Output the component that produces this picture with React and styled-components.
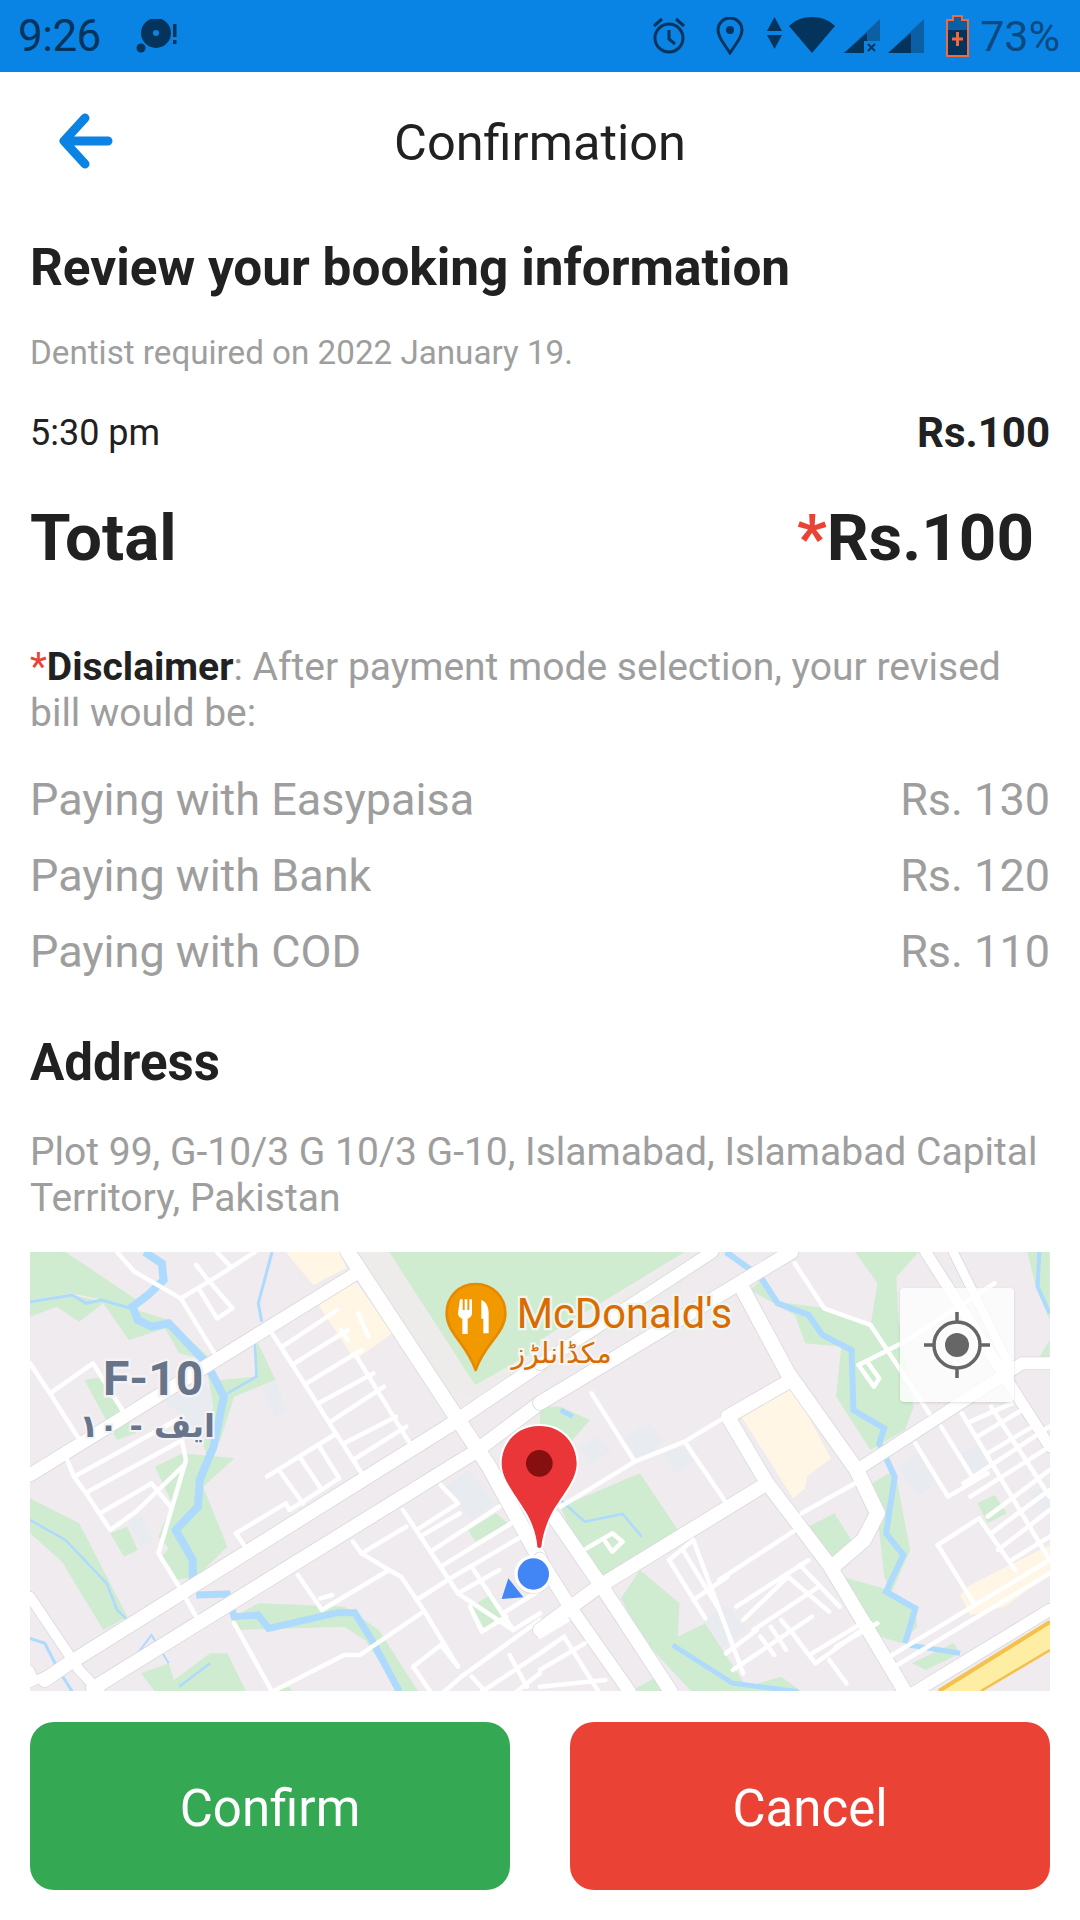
import React from "react";
import styled, { createGlobalStyle } from "styled-components";

const Global = createGlobalStyle`
  html, body { margin: 0; padding: 0; background: #fff; }
  body { font-family: Roboto, "Liberation Sans", sans-serif; color: #212121; }
`;

const Page = styled.div`
  width: 1080px;
  height: 1920px;
  display: flex;
  flex-direction: column;
  overflow: hidden;
  background: #fff;
`;

const StatusBar = styled.div`
  height: 72px;
  flex: none;
  background: #0a84e4;
  display: flex;
  align-items: center;
  padding: 0 20px 0 18px;
  color: #04345c;
`;
const Clock = styled.span`
  font-size: 44px;
  letter-spacing: -0.5px;
  margin-right: 35px;
  line-height: 72px;
`;
const StatusIcons = styled.div`
  margin-left: auto;
  display: flex;
  align-items: center;
`;
const StatusSvg = styled.svg`
  display: block;
  flex: none;
  margin-left: ${(p) => p.$gap || 0}px;
  margin-top: ${(p) => p.$up || 0}px;
`;
const Percent = styled.span`
  font-size: 43px;
  color: #0b4a80;
  margin-left: 10px;
  line-height: 72px;
`;

const Header = styled.header`
  height: 140px;
  flex: none;
  position: relative;
  display: flex;
  align-items: center;
  justify-content: center;
`;
const BackIcon = styled.svg`
  position: absolute;
  left: 56px;
  top: 39px;
`;
const Title = styled.h1`
  margin: 0;
  font-size: 50.5px;
  font-weight: 400;
  color: #212121;
`;

const Content = styled.main`
  flex: 1;
  padding: 0 30px;
  display: flex;
  flex-direction: column;
`;
const Heading = styled.h2`
  margin: 28px 0 0;
  font-size: 51.3px;
  line-height: 56px;
  font-weight: 700;
`;
const Sub = styled.p`
  margin: 37px 0 0;
  font-size: 33.2px;
  line-height: 40px;
  color: #9e9e9e;
`;
const Row = styled.div`
  display: flex;
  justify-content: space-between;
  align-items: baseline;
`;
const SlotRow = styled(Row)`
  margin-top: 35px;
  font-size: 36px;
  line-height: 50px;
  align-items: flex-end;
`;
const Price = styled.span`
  font-size: 42px;
  font-weight: 700;
`;
const TotalRow = styled(Row)`
  margin-top: 42px;
  font-size: 65.5px;
  line-height: 76px;
  font-weight: 700;
  padding-right: 16px;
`;
const Star = styled.span`
  color: #ea4335;
`;
const Disclaimer = styled.p`
  margin: 68px 0 0;
  font-size: 39px;
  line-height: 46px;
  color: #9e9e9e;
  b {
    color: #212121;
    font-weight: 700;
  }
`;
const Fees = styled.div`
  margin-top: 26px;
`;
const FeeRow = styled(Row)`
  font-size: 45px;
  height: 76px;
  line-height: 76px;
  color: #9e9e9e;
`;
const SubHeading = styled.h3`
  margin: 37px 0 0;
  font-size: 51px;
  line-height: 72px;
  font-weight: 700;
`;
const AddressText = styled.p`
  margin: 30px 0 0;
  font-size: 39px;
  line-height: 46px;
  color: #9e9e9e;
`;
const MapBox = styled.div`
  position: relative;
  margin-top: 31px;
  height: 439px;
  overflow: hidden;
  background: #efebef;
  flex: none;
`;
const MapSvg = styled.svg`
  display: block;
  width: 1020px;
  height: 439px;
`;
const LocateButton = styled.div`
  position: absolute;
  left: 870px;
  top: 36px;
  width: 114px;
  height: 114px;
  border-radius: 4px;
  background: rgba(255, 255, 255, 0.78);
  box-shadow: 0 1px 3px rgba(0, 0, 0, 0.12);
  display: flex;
  align-items: center;
  justify-content: center;
`;
const Footer = styled.footer`
  flex: none;
  display: flex;
  justify-content: space-between;
  padding: 0 30px 30px;
`;
const ActionButton = styled.button`
  width: 480px;
  height: 168px;
  border: 0;
  border-radius: 24px;
  background: ${(p) => p.$bg};
  color: #fff;
  font-family: inherit;
  font-size: 51px;
  font-weight: 400;
  padding: 4px 0 0;
`;

const GREEN = [
  "87,36 190,36 405,185 380,205 290,178 210,160 87,180",
  "87,185 210,165 380,205 375,300 300,190 230,245 165,200 87,230",
  "300,190 380,205 490,240 610,355 600,360 520,340 480,265 375,300",
  "600,385 640,420 740,410 745,300 800,420 680,470 640,600 600,650 590,610 620,500",
  "450,680 530,640 680,655 590,740 660,920 570,1010 510,1020 470,950 490,925 460,890 500,790",
  "87,775 230,850 370,1130 300,1170 180,965 87,880",
  "245,420 300,410 395,580 340,600",
  "320,880 370,860 400,930 360,950",
  "680,1130 750,1090 1000,1100 1100,1170 1215,1355 1160,1355 1060,1200 1000,1160 680,1170",
  "410,1300 490,1270 505,1320 610,1240 660,1240 715,1355 450,1355",
  "790,1355 840,1340 850,1355",
  "1370,1100 1430,1060 1470,1130 1410,1170",
  "1360,870 1440,820 1475,850 1380,905",
  "1130,36 1568,36 1568,325 1380,435",
];
const GREEN_R = [
  "0,36 420,36 0,300",
  "0,500 60,500 145,540 60,640 0,560",
  "60,800 290,700 400,870 180,1010 80,850",
  "610,150 650,110 690,185 830,205 960,255 980,130 915,36 1100,36 1035,110 1040,230 1085,500 1060,570 960,630 860,470 875,320 770,310 740,225",
  "780,860 855,820 910,910 840,970",
  "965,730 1030,690 1075,930 1020,1060 1000,1010 980,830",
  "860,1005 980,1040 1010,1050 1090,1100 1095,1160 1050,1210 990,1190",
  "1080,1270 1200,1210 1220,1240 1120,1290",
  "235,1075 290,990 405,1090 400,1190 480,1150 600,1340 700,1310 760,1355 440,1355 300,1200",
  "260,1355 340,1310 380,1355",
  "1270,790 1320,765 1355,820 1300,850",
  "1415,36 1480,36 1480,240 1440,140",
  "1440,370 1480,300 1480,370",
];
const YELLOW = [
  "830,36 990,36 1005,85 910,135",
  "1030,120 1140,280 1030,360 925,195",
];
const YELLOW_R = [
  "585,530 730,435 845,655 775,710 770,745 735,775",
  "1220,1065 1250,1035 1480,915 1480,1000 1350,1100 1250,1125",
];
const BLOCK = [
  "760,445 800,425 835,510 800,530",
  "370,840 410,825 445,900 410,925",
  "1290,745 1360,690 1440,790 1370,840",
  "470,480 590,430 630,470 610,610 520,520",
];
const BLOCK_R = [
  "115,620 170,590 205,630 145,675",
  "245,590 320,550 360,610 285,660",
  "360,640 425,620 445,665 395,705",
  "1040,680 1100,640 1150,730 1095,770",
  "1225,640 1280,615 1310,670 1260,710",
  "1415,760 1480,735 1480,830",
  "480,1140 540,1095 600,1170 530,1220",
];
const WATER = [
  [8, "420,36 470,70 475,120 430,165 385,200 400,240 440,260 490,250 600,370 650,470 620,620 580,720 575,800 510,870 560,960 560,1030"],
  [3, "87,185 210,165 250,190 295,180 380,205"],
  [2.5, "87,840 190,900 310,1030 340,1110 380,1150"],
  [3, "790,36 750,190 760,245"],
  [2.5, "740,310 745,410 660,460"],
  [7, "570,1065 660,1062 680,1130 750,1125 780,1165 980,1118 1030,1118 1080,1200 1160,1355"],
  [3, "87,1195 130,1210 170,1290 210,1355"],
  [2, "385,1260 440,1185 490,1270"],
  [2.5, "610,1270 520,1340"],
];
const WATER_R = [
  [6, "540,36 640,110 690,190 780,225 820,285 905,330 910,510 1000,565 985,610 1030,710 1005,880 1055,945 1005,1055 1090,1105 1060,1210"],
  [2.5, "60,780 130,845 240,822 295,890"],
  [5, "60,510 95,530"],
  [5, "1070,1215 1130,1225 1220,1240"],
  [5, "385,1215 560,1330 750,1355"],
  [4, "1450,36 1445,140 1480,220"],
];
const MAJOR = [
  [13, "87,705 1035,100"],
  [15, "1010,36 1280,460 1420,680 1568,957"],
  [14, "130,1320 200,1270 1300,560 1568,373"],
  [14, "270,1345 1373,640 1568,489"],
  [10, "87,1070 230,1290 290,1355"],
  [8, "87,1330 200,1270"],
  [8, "87,1290 100,1320"],
];
const MAJOR_R = [
  [12, "0,373 500,36"],
  [14, "0,489 730,36"],
  [15, "590,150 720,400 920,690 980,820 940,900 850,980"],
  [14, "0,1170 170,1040 660,730"],
  [14, "730,420 545,530 660,730 840,975 1060,1355"],
  [12, "920,690 1130,550 1400,370 1480,370"],
  [14, "40,830 180,1040 380,1355"],
  [12, "1090,1355 1480,1110"],
  [11, "1120,36 1480,620"],
  [9, "1200,36 1360,370"],
  [13, "0,957 87,1101 260,1355"],
];
const MINOR = [
  "340,36 390,95 525,175 620,335",
  "525,175 630,110 740,36",
  "630,36 670,80",
  "570,75 600,115 675,205 630,235 580,150",
  "145,460 270,370 355,510",
  "87,370 145,460 225,590",
  "195,660 215,710 250,760 320,870 395,815 530,680",
  "215,710 530,530",
  "255,755 530,600",
  "290,820 440,730",
  "440,730 495,800",
  "530,610 540,660 460,940 520,1040 575,1140",
  "790,280 890,440 960,555 1050,700",
  "820,320 980,210",
  "855,370 1010,270",
  "890,430 1050,330",
  "925,490 1085,400",
  "960,545 1115,440",
  "1000,610 1150,530",
  "1025,660 1180,560",
  "1030,340 1190,610",
  "990,270 1010,300",
  "1040,220 1070,290",
  "775,710 970,585",
  "810,690 880,790",
  "870,650 935,750",
  "925,615 985,715",
  "880,785 985,715",
  "830,790 840,810 880,785",
  "685,880 830,790",
  "685,880 715,925",
  "865,1005 935,1110 1130,990 1165,1010 1230,1110 1330,1280",
  "930,1075 965,1065",
  "1025,905 1050,940 1130,990",
  "1050,940 1180,860",
  "1170,810 1330,1060 1490,1170",
  "1210,870 1330,790 1280,735",
  "1220,890 1335,820",
  "1250,935 1450,800",
  "1280,980 1500,840",
  "1300,1020 1530,880",
  "1210,1080 1300,1020",
  "1330,1060 1450,990",
  "1370,980 1490,1170",
  "1365,1100 1400,1175 1470,1130",
  "680,1150 790,1355",
  "790,1355 1000,1245 1045,1245 1230,1115",
  "1200,1280 1280,1215 1330,1280",
  "1200,1280 1250,1355",
  "1290,1355 1340,1310 1568,1140",
  "1370,1310 1410,1355",
  "1480,1245 1530,1340",
  "1400,1355 1568,1240",
  "1500,1355 1568,1300",
  "1460,1120 1568,1050",
  "1490,1170 1568,1120",
];
const MINOR_R = [
  "740,70 825,205 960,255 1130,520",
  "925,375 1050,310 1320,130",
  "925,375 970,440 985,415 950,365",
  "150,460 275,665",
  "60,800 275,665 420,605 540,530",
  "420,605 535,780",
  "760,820 915,730",
  "520,1020 735,875",
  "375,960 445,900 590,1300",
  "375,960 480,1135",
  "415,930 515,1100",
  "445,1080 545,1010",
  "570,1100 780,960",
  "590,1140 720,1010",
  "620,1170 810,1040",
  "720,1010 840,1115",
  "755,975 870,1100",
  "640,1190 680,1245",
  "670,1160 715,1230",
  "700,1140 750,1200",
  "540,1240 630,1170",
  "560,1290 790,1130",
  "740,1190 800,1270 960,1150",
  "840,1260 890,1330",
  "790,1240 950,1140",
  "860,1220 980,1150",
  "135,925 210,880 240,905 210,935 190,905",
  "0,1190 80,1140",
  "0,1240 70,1190",
  "0,1290 130,1210",
  "0,1340 190,1320",
  "70,1190 170,1355",
  "1090,610 1185,770 1300,700",
  "1165,560 1255,710",
  "1225,520 1480,960",
  "1310,500 1480,770",
  "1250,545 1370,490",
  "1270,590 1400,510",
  "1300,640 1430,560",
  "1230,730 1480,560",
  "1250,770 1480,620",
  "1300,830 1480,690",
  "1310,880 1480,750",
  "1330,930 1480,810",
  "1370,960 1480,890",
  "1155,915 1275,835 1380,990",
  "1155,915 1260,1090",
  "1015,1250 1480,960",
  "1030,1280 1480,1000",
];

const Layer = ({ green, yellow, block, water, transform }) => (
  <g transform={transform}>
    {yellow.map((p) => <polygon key={p} points={p} fill="#fff6e6" />)}
    {block.map((p) => <polygon key={p} points={p} fill="#e8ebef" />)}
    {green.map((p) => <polygon key={p} points={p} fill="#cfecd0" />)}
    {water.map(([w, p]) => (
      <polyline key={p} points={p} fill="none" stroke="#aedafe" strokeWidth={w} vectorEffect="non-scaling-stroke" />
    ))}
  </g>
);
const Roads = ({ major, minor, transform }) => (
  <g transform={transform} fill="none" strokeLinejoin="round" strokeLinecap="round">
    {major.map(([w, p]) => (
      <polyline key={p} points={p} stroke="#d9d7db" strokeWidth={w + 1.5} vectorEffect="non-scaling-stroke" />
    ))}
    {minor.map((p) => (
      <polyline key={p} points={p} stroke="#fff" strokeWidth="4.5" vectorEffect="non-scaling-stroke" />
    ))}
    {major.map(([w, p]) => (
      <polyline key={p} points={p} stroke="#fff" strokeWidth={w} vectorEffect="non-scaling-stroke" />
    ))}
  </g>
);

const LEFT = "translate(-30 -12) scale(0.34435 0.33333)";
const RIGHT = "translate(510 -12) scale(0.34435 0.33333)";

const MapArt = () => (
  <MapSvg viewBox="0 0 1020 439">
    <polygon points="328,0 360,0 445,133 510,96 510,104 447,143 411,141" fill="#eeecea" />
    <polygon points="478,168 510,150 510,176 500,190 482,190" fill="#eeecea" />
    <polygon points="510,96 660,0 700,0 510,130" fill="#eeecea" />
    <Layer transform={LEFT} green={GREEN} yellow={YELLOW} block={BLOCK} water={WATER} />
    <Layer transform={RIGHT} green={GREEN_R} yellow={YELLOW_R} block={BLOCK_R} water={WATER_R} />
    <Roads transform={LEFT} major={MAJOR} minor={MINOR} />
    <Roads transform={RIGHT} major={MAJOR_R} minor={MINOR_R} />
    <polygon points="909,439 1020,370 1020,398 951,439" fill="#fdeea4" />
    <polyline points="909,439 1020,370" fill="none" stroke="#f5c04b" strokeWidth="4" />
    <polyline points="951,439 1020,398" fill="none" stroke="#f5c04b" strokeWidth="2.5" />
    <text x="73" y="143" fontFamily="Roboto" fontWeight="700" fontSize="48" fill="#677489" stroke="#f3f3f5" strokeWidth="5" paintOrder="stroke">F-10</text>
    <text x="185" y="185" direction="rtl" fontFamily="'DejaVu Sans', sans-serif" fontWeight="700" fontSize="32" fill="#677489" stroke="#f3f3f5" strokeWidth="4" paintOrder="stroke">ایف - ١٠</text>
    <g transform="translate(400 8) scale(0.33333)">
      <path d="M137,72 C85,72 50,112 50,160 C50,220 110,250 137,330 C164,250 226,220 226,160 C226,112 189,72 137,72 Z" fill="#f29900" stroke="#e58a00" strokeWidth="8" strokeLinejoin="round" />
      <path d="M90,118 h8 v32 h6 v-32 h8 v32 h6 v-32 h8 v40 c0,12 -8,16 -13,18 v46 h-16 v-46 c-5,-2 -13,-6 -13,-18 Z" fill="#fff" />
      <path d="M154,120 c14,4 22,20 22,40 v60 h-16 v-44 h-6 Z" fill="#fff" />
      <text x="260" y="205" fontFamily="Roboto" fontSize="125" fill="#d96b00" stroke="#eef6ee" strokeWidth="14" paintOrder="stroke">McDonald's</text>
      <text x="545" y="310" direction="rtl" fontFamily="'DejaVu Sans', sans-serif" fontSize="85" fill="#d96b00" stroke="#f6f6f4" strokeWidth="12" paintOrder="stroke">مکڈانلڑز</text>
      <path d="M235,955 L215,1017 L280,1012 Z" fill="#4285f4" />
      <circle cx="310" cy="946" r="56" fill="#000" opacity="0.1" />
      <circle cx="310" cy="942" r="52" fill="#4285f4" stroke="#fff" strokeWidth="10" />
      <path d="M328,498 C255,498 215,555 215,610 C215,660 255,700 290,760 C310,795 320,830 322,860 Q328,868 334,860 C337,830 347,795 365,760 C400,700 440,660 440,610 C440,555 400,498 328,498 Z" fill="#ea3539" stroke="#fff" strokeWidth="12" paintOrder="stroke" />
      <circle cx="328" cy="610" r="40" fill="#860f0f" />
    </g>
  </MapSvg>
);

const DARK = "#04345c";
const MID = "#0b5fa5";

const StatusRow = () => (
  <StatusIcons>
    <StatusSvg width="36" height="38" viewBox="0 0 36 38" fill="none" stroke={DARK} strokeWidth="3">
      <circle cx="18" cy="21" r="14" />
      <path d="M18 13v9l6 5M3 9l8-7M33 9l-8-7" />
    </StatusSvg>
    <StatusSvg $gap={29} width="28" height="38" viewBox="0 0 28 38" fill="none">
      <path d="M14 36C6 24 2 19 2 13a12 12 0 0 1 24 0c0 6-4 11-12 23Z" stroke={DARK} strokeWidth="3" />
      <circle cx="14" cy="13" r="4" fill={DARK} />
    </StatusSvg>
    <StatusSvg $gap={23} $up={-6} width="15" height="32" viewBox="0 0 15 32">
      <path d="M7.5 0L15 14H0Z" fill={DARK} />
      <path d="M7.5 32L15 18H0Z" fill={DARK} />
    </StatusSvg>
    <StatusSvg $gap={7} $up={-2} width="46" height="36" viewBox="0 0 46 36">
      <path d="M23 36L0 9C6 3 14 0 23 0s17 3 23 9Z" fill={DARK} />
    </StatusSvg>
    <StatusSvg $gap={9} width="36" height="34" viewBox="0 0 36 34">
      <path d="M36 0V34H0Z" fill={MID} />
      <path d="M23 14V34H0Z" fill={DARK} />
      <rect x="20" y="22" width="16" height="12" fill="#0a84e4" />
      <path d="M24 25l7 7M31 25l-7 7" stroke={DARK} strokeWidth="2" />
    </StatusSvg>
    <StatusSvg $gap={8} width="36" height="34" viewBox="0 0 36 34">
      <path d="M36 0V34H0Z" fill={MID} />
      <path d="M23 14V34H0Z" fill={DARK} />
    </StatusSvg>
    <StatusSvg $gap={21} width="25" height="42" viewBox="0 0 25 42">
      <path d="M8 1h9v4h6v36H2V5h6Z" fill={MID} stroke="#f4683a" strokeWidth="2" />
      <rect x="3" y="15" width="19" height="25" fill={DARK} />
      <path d="M12.5 17v14M7 24h11" stroke="#f4683a" strokeWidth="3" />
    </StatusSvg>
    <Percent>73%</Percent>
  </StatusIcons>
);

export default function App() {
  return (
    <Page>
      <Global />
      <StatusBar>
        <Clock>9:26</Clock>
        <svg width="42" height="34" viewBox="0 0 42 34">
          <circle cx="20" cy="14" r="15" fill={DARK} />
          <circle cx="20" cy="14" r="3" fill="#0a84e4" />
          <circle cx="5" cy="29" r="4.5" fill={DARK} />
          <path d="M37 5h3.5v13H37zM37 21h3.5v4H37z" fill={DARK} />
        </svg>
        <StatusRow />
      </StatusBar>
      <Header>
        <BackIcon width="60" height="58" viewBox="0 0 60 58" fill="none" stroke="#0a84e4" strokeWidth="9" strokeLinecap="round" strokeLinejoin="round">
          <path d="M52 30H12M29 7L8 30l21 23" />
        </BackIcon>
        <Title>Confirmation</Title>
      </Header>
      <Content>
        <Heading>Review your booking information</Heading>
        <Sub>Dentist required on 2022 January 19.</Sub>
        <SlotRow>
          <span>5:30 pm</span>
          <Price>Rs.100</Price>
        </SlotRow>
        <TotalRow>
          <span>Total</span>
          <span><Star>*</Star>Rs.100</span>
        </TotalRow>
        <Disclaimer>
          <Star>*</Star><b>Disclaimer</b>: After payment mode selection, your revised bill would be:
        </Disclaimer>
        <Fees>
          <FeeRow><span>Paying with Easypaisa</span><span>Rs. 130</span></FeeRow>
          <FeeRow><span>Paying with Bank</span><span>Rs. 120</span></FeeRow>
          <FeeRow><span>Paying with COD</span><span>Rs. 110</span></FeeRow>
        </Fees>
        <SubHeading>Address</SubHeading>
        <AddressText>Plot 99, G-10/3 G 10/3 G-10, Islamabad, Islamabad Capital Territory, Pakistan</AddressText>
        <MapBox>
          <MapArt />
          <LocateButton>
            <svg width="66" height="66" viewBox="0 0 66 66" fill="none" stroke="#666" strokeWidth="3.5">
              <circle cx="33" cy="33" r="23" />
              <circle cx="33" cy="33" r="12" fill="#666" stroke="none" />
              <path d="M33 0v10M33 56v10M0 33h10M56 33h10" />
            </svg>
          </LocateButton>
        </MapBox>
      </Content>
      <Footer>
        <ActionButton $bg="#34a853">Confirm</ActionButton>
        <ActionButton $bg="#ea4335">Cancel</ActionButton>
      </Footer>
    </Page>
  );
}
